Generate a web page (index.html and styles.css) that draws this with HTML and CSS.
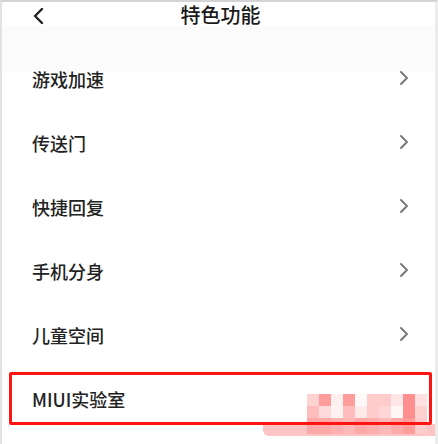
FILE: index.html
```html
<!DOCTYPE html>
<html lang="zh">
<head>
<meta charset="utf-8">
<link rel="stylesheet" href="styles.css">
</head>
<body>
<div class="frame">
  <header class="bar">
    <svg class="back" width="14" height="18" viewBox="0 0 14 18"><path d="M10 2 L3 9 L10 16" fill="none" stroke="#222" stroke-width="2.4" stroke-linecap="round" stroke-linejoin="round"/></svg>
    <h1 class="title">特色功能</h1>
  </header>
  <ul class="list">
    <li class="row"><span>游戏加速</span><svg class="chev" width="10" height="16" viewBox="0 0 10 16"><path d="M2 2 L8 8 L2 14" fill="none" stroke="#7a7a7a" stroke-width="2" stroke-linecap="round" stroke-linejoin="round"/></svg></li>
    <li class="row"><span>传送门</span><svg class="chev" width="10" height="16" viewBox="0 0 10 16"><path d="M2 2 L8 8 L2 14" fill="none" stroke="#7a7a7a" stroke-width="2" stroke-linecap="round" stroke-linejoin="round"/></svg></li>
    <li class="row"><span>快捷回复</span><svg class="chev" width="10" height="16" viewBox="0 0 10 16"><path d="M2 2 L8 8 L2 14" fill="none" stroke="#7a7a7a" stroke-width="2" stroke-linecap="round" stroke-linejoin="round"/></svg></li>
    <li class="row"><span>手机分身</span><svg class="chev" width="10" height="16" viewBox="0 0 10 16"><path d="M2 2 L8 8 L2 14" fill="none" stroke="#7a7a7a" stroke-width="2" stroke-linecap="round" stroke-linejoin="round"/></svg></li>
    <li class="row"><span>儿童空间</span><svg class="chev" width="10" height="16" viewBox="0 0 10 16"><path d="M2 2 L8 8 L2 14" fill="none" stroke="#7a7a7a" stroke-width="2" stroke-linecap="round" stroke-linejoin="round"/></svg></li>
    <li class="row last"><span>MIUI实验室</span>
      <div class="mosaic">
        <div class="strip"></div>
        <div class="grid">
          <i style="background:#ffd2d2"></i><i style="background:#ff9c9c"></i><i style="background:#fff0f0"></i><i style="background:#ff9c9c"></i><i style="background:#fff8f8"></i><i style="background:#ffcccc"></i><i style="background:#ffcccc"></i><i style="background:#ffe6e6"></i><i style="background:#ff8e8e"></i><i style="background:#ffe0e0"></i>
          <i style="background:#ffbcbc"></i><i style="background:#ffdada"></i><i style="background:#fff2f2"></i><i style="background:#ffbcbc"></i><i style="background:#ffeaea"></i><i style="background:#ffcccc"></i><i style="background:#ffd6d6"></i><i style="background:#fff6f6"></i><i style="background:#ff8e8e"></i><i style="background:#ffd0d0"></i>
          <i style="background:#ffa8a8"></i><i style="background:#ffa8a8"></i><i style="background:#ffb0b0"></i><i style="background:#ffb8b8"></i><i style="background:#ffa8a8"></i><i style="background:#ffaeae"></i><i style="background:#ffb8b8"></i><i style="background:#ffaaaa"></i><i style="background:#ff9c9c"></i><i style="background:#ffcccc"></i>
        </div>
      </div>
      <div class="highlight"></div>
    </li>
  </ul>
</div>
</body>
</html>
```
FILE: styles.css
```css
* { box-sizing: border-box; }
html, body {
  margin: 0;
  padding: 0;
  background: #fff;
}
body {
  width: 438px;
  height: 444px;
  overflow: hidden;
  font-family: "Noto Sans CJK SC", "Noto Sans", sans-serif;
  color: #222;
}
.frame {
  position: relative;
  width: 438px;
  height: 444px;
  border-top: 2px solid #d4d4d4;
  border-left: 2px solid #e2e2e2;
  border-right: 3px solid #ececec;
  background: linear-gradient(to bottom, #fff 24px, #fbfbfb 24px, #fbfbfb 70px, #fff 70px);
}
.bar {
  position: relative;
  height: 45px;
}
.back {
  position: absolute;
  left: 30px;
  top: 5px;
}
.title {
  margin: 0;
  text-align: center;
  font-size: 20px;
  font-weight: 500;
  line-height: 26px;
  color: #1a1a1a;
  padding-left: 4px;
}
.list {
  list-style: none;
  margin: 0;
  padding: 0;
}
.row {
  position: relative;
  display: flex;
  align-items: center;
  justify-content: space-between;
  height: 64px;
  padding: 0 26px 0 30px;
  font-size: 18px;
  font-weight: 500;
  color: #222;
}
.chev { margin-top: -2px; }
.mosaic {
  position: absolute;
  left: 0;
  top: 0;
  width: 433px;
  height: 76px;
  pointer-events: none;
}
.grid {
  position: absolute;
  left: 305px;
  top: 27px;
  display: grid;
  grid-template-columns: repeat(10, 12px);
  grid-template-rows: 12px 12px 16px;
}
.grid i { display: block; }
.strip {
  position: absolute;
  left: 261px;
  top: 57px;
  width: 172px;
  height: 12px;
  background: #ffc4c4;
  border-bottom-left-radius: 6px;
}
.highlight {
  position: absolute;
  left: 7px;
  top: 5px;
  width: 423px;
  height: 53px;
  border: 3.5px solid #ff1414;
  border-radius: 2px;
}
```
